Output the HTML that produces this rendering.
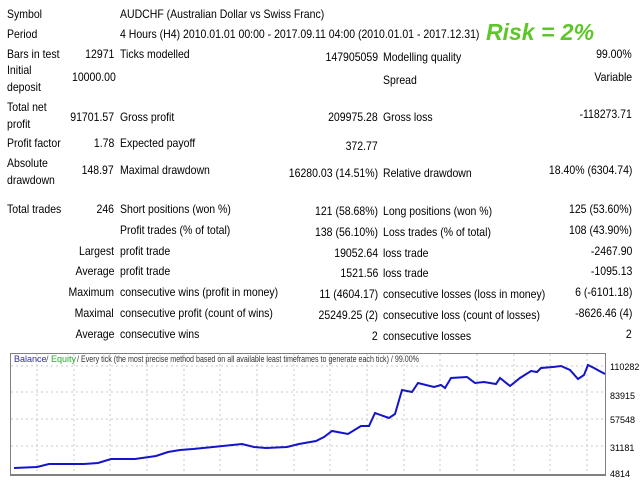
<!DOCTYPE html>
<html><head><meta charset="utf-8"><style>
body{margin:0;width:640px;height:480px;background:#fff;position:relative;overflow:hidden;font-family:"Liberation Sans",sans-serif;font-size:12px;color:#000}
span{position:absolute;white-space:nowrap;line-height:14px;transform:scaleX(0.875);transform-origin:left top}
.b,.d,.f{transform-origin:right top}
.a{left:7px}.b{right:526px}.c{left:120px}.d{right:262px}.e{left:383px}.f{right:8px}
</style></head><body>
<span class="a" style="top:7px">Symbol</span><span class="c" style="top:7px">AUDCHF (Australian Dollar vs Swiss Franc)</span>
<span class="a" style="top:27px">Period</span><span class="c" style="top:27px">4 Hours (H4) 2010.01.01 00:00 - 2017.09.11 04:00 (2010.01.01 - 2017.12.31)</span>
<span style="left:486px;top:18px;font-size:23px;line-height:28px;font-weight:bold;font-style:italic;color:#5ec62a;transform:none">Risk = 2%</span>
<span class="a" style="top:47px">Bars in test</span><span class="b" style="top:47px">12971</span><span class="c" style="top:47px">Ticks modelled</span><span class="d" style="top:50px">147905059</span><span class="e" style="top:50px">Modelling quality</span><span class="f" style="top:47px">99.00%</span>
<span class="a" style="top:63px">Initial</span><span class="a" style="top:80px">deposit</span><span style="left:72px;top:70px">10000.00</span><span class="e" style="top:73px">Spread</span><span class="f" style="top:70px">Variable</span>
<span class="a" style="top:100px">Total net</span><span class="a" style="top:117px">profit</span><span class="b" style="top:110px">91701.57</span><span class="c" style="top:110px">Gross profit</span><span class="d" style="top:110px">209975.28</span><span class="e" style="top:110px">Gross loss</span><span class="f" style="top:107px">-118273.71</span>
<span class="a" style="top:136px">Profit factor</span><span class="b" style="top:136px">1.78</span><span class="c" style="top:136px">Expected payoff</span><span class="d" style="top:139px">372.77</span>
<span class="a" style="top:156px">Absolute</span><span class="a" style="top:173px">drawdown</span><span class="b" style="top:163px">148.97</span><span class="c" style="top:163px">Maximal drawdown</span><span class="d" style="top:166px">16280.03 (14.51%)</span><span class="e" style="top:166px">Relative drawdown</span><span class="f" style="top:163px">18.40% (6304.74)</span>
<span class="a" style="top:202px">Total trades</span><span class="b" style="top:202px">246</span><span class="c" style="top:202px">Short positions (won %)</span><span class="d" style="top:204px">121 (58.68%)</span><span class="e" style="top:204px">Long positions (won %)</span><span class="f" style="top:202px">125 (53.60%)</span>
<span class="c" style="top:223px">Profit trades (% of total)</span><span class="d" style="top:225px">138 (56.10%)</span><span class="e" style="top:225px">Loss trades (% of total)</span><span class="f" style="top:223px">108 (43.90%)</span>
<span class="b" style="top:244px">Largest</span><span class="c" style="top:244px">profit trade</span><span class="d" style="top:246px">19052.64</span><span class="e" style="top:246px">loss trade</span><span class="f" style="top:244px">-2467.90</span>
<span class="b" style="top:264px">Average</span><span class="c" style="top:264px">profit trade</span><span class="d" style="top:266px">1521.56</span><span class="e" style="top:266px">loss trade</span><span class="f" style="top:264px">-1095.13</span>
<span class="b" style="top:285px">Maximum</span><span class="c" style="top:285px">consecutive wins (profit in money)</span><span class="d" style="top:287px">11 (4604.17)</span><span class="e" style="top:287px">consecutive losses (loss in money)</span><span class="f" style="top:285px">6 (-6101.18)</span>
<span class="b" style="top:306px">Maximal</span><span class="c" style="top:306px">consecutive profit (count of wins)</span><span class="d" style="top:308px">25249.25 (2)</span><span class="e" style="top:308px">consecutive loss (count of losses)</span><span class="f" style="top:306px">-8626.46 (4)</span>
<span class="b" style="top:327px">Average</span><span class="c" style="top:327px">consecutive wins</span><span class="d" style="top:329px">2</span><span class="e" style="top:329px">consecutive losses</span><span class="f" style="top:327px">2</span>
<svg style="position:absolute;left:0;top:0" width="640" height="480">
<g stroke="#c8c8c8" stroke-dasharray="2,3" stroke-width="1">
<line x1="11" y1="392" x2="605" y2="392"/><line x1="11" y1="419" x2="605" y2="419"/><line x1="11" y1="446" x2="605" y2="446"/><line x1="11" y1="366" x2="605" y2="366"/>
<line x1="37" y1="354" x2="37" y2="474"/><line x1="74" y1="354" x2="74" y2="474"/><line x1="110" y1="354" x2="110" y2="474"/><line x1="147" y1="354" x2="147" y2="474"/><line x1="184" y1="354" x2="184" y2="474"/><line x1="220" y1="354" x2="220" y2="474"/><line x1="257" y1="354" x2="257" y2="474"/><line x1="294" y1="354" x2="294" y2="474"/><line x1="330" y1="354" x2="330" y2="474"/><line x1="367" y1="354" x2="367" y2="474"/><line x1="404" y1="354" x2="404" y2="474"/><line x1="440" y1="354" x2="440" y2="474"/><line x1="477" y1="354" x2="477" y2="474"/><line x1="514" y1="354" x2="514" y2="474"/><line x1="550" y1="354" x2="550" y2="474"/><line x1="587" y1="354" x2="587" y2="474"/>
</g>
<rect x="10.5" y="353.5" width="595" height="121" fill="none" stroke="#808080"/>
<line x1="10" y1="475" x2="606" y2="475" stroke="#808080" stroke-width="2"/>
<polyline fill="none" stroke="#1414c8" stroke-width="2" points="14,468 37,467 49,464 84,464 98,463 111,459 135,459 156,456 168,452 180,450 193,449 213,447 242,444 254,447 266,448 287,447 299,444 316,441 324,437 332,431 348,434 361,426 369,426 375,413 389,418 395,414 402,390 412,392 418,383 434,387 441,385 445,388 451,378 467,377 475,383 484,382 496,384 500,378 510,386 520,378 531,371 537,372 541,368 553,367 561,366 570,370 578,379 584,375 588,365 594,368 605,374"/>
<g font-family="Liberation Sans,sans-serif" font-size="9">
<text x="14" y="362" fill="#3030a0">Balance</text><text x="46" y="362" fill="#555">/</text><text x="51" y="362" fill="#2aaa2a">Equity</text><text x="77" y="362" fill="#333" textLength="342" lengthAdjust="spacingAndGlyphs">/ Every tick (the most precise method based on all available least timeframes to generate each tick) / 99.00%</text>
<text x="610" y="370">110282</text><text x="610" y="399">83915</text><text x="610" y="423">57548</text><text x="610" y="451">31181</text><text x="610" y="477">4814</text>
</g>
</svg>
</body></html>
